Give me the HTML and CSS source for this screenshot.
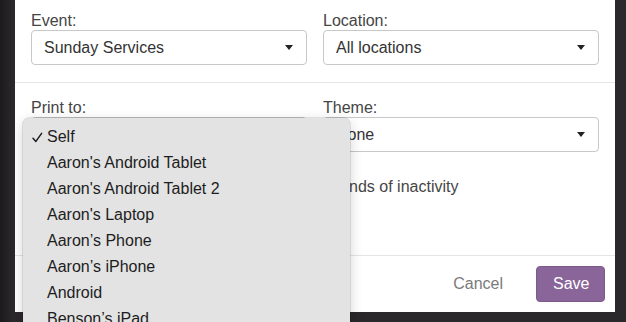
FILE: index.html
```html
<!DOCTYPE html>
<html>
<head>
<meta charset="utf-8">
<link rel="stylesheet" href="styles.css">
</head>
<body>
<div class="modal">
  <div class="section top">
    <div class="grid">
      <div class="field">
        <label class="label">Event:</label>
        <div class="select"><span>Sunday Services</span><span class="caret"></span></div>
      </div>
      <div class="field">
        <label class="label">Location:</label>
        <div class="select"><span>All locations</span><span class="caret"></span></div>
      </div>
    </div>
  </div>
  <div class="section mid">
    <div class="grid">
      <div class="field">
        <label class="label">Print to:</label>
        <div class="select"><span>Self</span><span class="caret"></span></div>
      </div>
      <div class="field">
        <label class="label">Theme:</label>
        <div class="select"><span>None</span><span class="caret"></span></div>
      </div>
    </div>
    <div class="timeout">
      <span>Reset after</span>
      <span class="num">60</span>
      <span>seconds of inactivity</span>
    </div>
  </div>
  <div class="footer">
    <button class="btn cancel">Cancel</button>
    <button class="btn save">Save</button>
  </div>
</div>

<div class="menu">
  <div class="item checked"><svg class="check" width="11" height="11" viewBox="0 0 11 11"><path d="M1 6.2 L3.9 9.4 L9.6 1.4" fill="none" stroke="#1d1d1d" stroke-width="1.5" stroke-linecap="round" stroke-linejoin="round"/></svg>Self</div>
  <div class="item">Aaron's Android Tablet</div>
  <div class="item">Aaron's Android Tablet 2</div>
  <div class="item">Aaron's Laptop</div>
  <div class="item">Aaron’s Phone</div>
  <div class="item">Aaron’s iPhone</div>
  <div class="item">Android</div>
  <div class="item">Benson’s iPad</div>
</div>
</body>
</html>
```
FILE: styles.css
```css
html, body {
  margin: 0;
  padding: 0;
}
body {
  width: 626px;
  height: 322px;
  overflow: hidden;
  position: relative;
  background: linear-gradient(to right, #1d1a1d 0, #2b282b 13px, #2b282b 100%);
  font-family: "Liberation Sans", Arial, sans-serif;
  font-size: 16px;
  color: #333;
}
.modal {
  margin-left: 15px;
  width: 600px;
  background: #fff;
}
.section {
  padding: 11px 16px 17px;
}
.mid {
  border-top: 1px solid #e5e5e5;
  padding-top: 15px;
  padding-bottom: 51px;
}
.grid {
  display: grid;
  grid-template-columns: 1fr 1fr;
  column-gap: 16px;
}
.label {
  display: block;
  line-height: 19px;
  color: #454545;
}
.select {
  box-sizing: border-box;
  height: 35px;
  border: 1px solid #c8c8c8;
  border-radius: 4px;
  display: flex;
  align-items: center;
  justify-content: space-between;
  padding: 0 13px 0 12px;
  color: #333;
}
.caret {
  width: 0;
  height: 0;
  border-left: 4px solid transparent;
  border-right: 4px solid transparent;
  border-top: 5px solid #222;
}
.timeout {
  margin-top: 17px;
  display: flex;
  align-items: center;
  gap: 6px;
  color: #454545;
}
.num {
  box-sizing: border-box;
  width: 192px;
  height: 35px;
  margin-left: 2px;
  border: 1px solid #c8c8c8;
  border-radius: 4px;
  padding: 0 12px;
  display: flex;
  align-items: center;
}
.footer {
  border-top: 1px solid #e5e5e5;
  padding: 10px 10px 10px;
  display: flex;
  justify-content: flex-end;
  gap: 17px;
}
.btn {
  font-family: "Liberation Sans", Arial, sans-serif;
  font-size: 16px;
  height: 36px;
  border-radius: 4px;
  cursor: pointer;
}
.cancel {
  background: transparent;
  border: none;
  color: #7a7a7a;
  padding: 0 16px;
}
.save {
  background: #8a6599;
  border: 1px solid #7c5a8a;
  color: #fff;
  padding: 0 16px;
  width: 69px;
}
.menu {
  position: absolute;
  left: 23px;
  top: 118px;
  width: 327px;
  height: 220px;
  box-sizing: border-box;
  padding-top: 6px;
  background: #e3e3e3;
  border-radius: 6px;
  box-shadow: 0 0 0 0.5px rgba(0, 0, 0, 0.18), 0 4px 14px rgba(0, 0, 0, 0.18);
  color: #1d1d1d;
}
.item {
  position: relative;
  line-height: 26px;
  padding-left: 24px;
  white-space: nowrap;
}
.check {
  position: absolute;
  left: 9px;
  top: 8px;
}
```
